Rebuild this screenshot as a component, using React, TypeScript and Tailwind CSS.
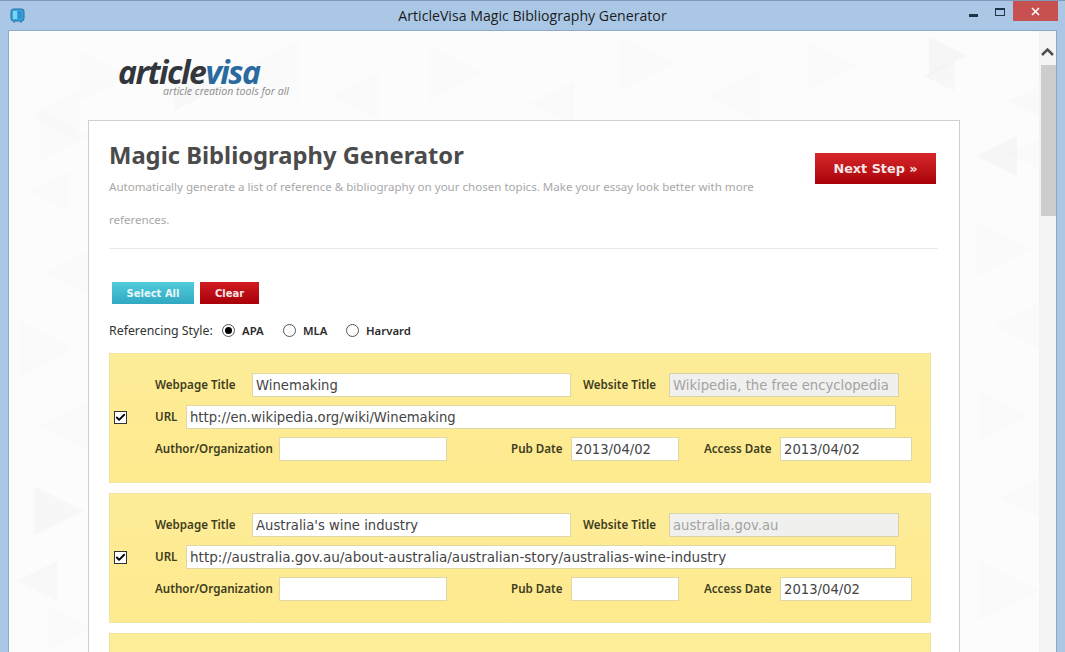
import { Check } from 'lucide-react';

// faint triangles of the page background: [x, y, size, flip, alpha]
const TRIANGLES: [number, number, number, number, number][] = [
  [20, 60, 50, 1, 0.01], [70, 20, 50, 0, 0.012], [165, 35, 45, 0, 0.02], [230, 10, 60, 1, 0.01],
  [320, 40, 50, 1, 0.01], [420, 15, 55, 0, 0.01], [520, 50, 45, 1, 0.01], [610, 5, 55, 0, 0.01],
  [700, 40, 50, 1, 0.01], [800, 10, 50, 0, 0.01], [920, 6, 38, 0, 0.03], [915, 30, 30, 1, 0.025],
  [1000, 50, 40, 1, 0.016], [1000, 100, 45, 1, 0.01], [968, 105, 40, 1, 0.03], [968, 190, 55, 0, 0.01],
  [985, 270, 50, 1, 0.01], [970, 360, 50, 0, 0.012], [990, 440, 55, 1, 0.01], [970, 530, 60, 0, 0.01],
  [30, 80, 50, 0, 0.012], [20, 140, 40, 1, 0.01], [35, 220, 45, 1, 0.012], [10, 290, 55, 0, 0.012],
  [30, 370, 50, 1, 0.012], [25, 455, 50, 0, 0.028], [8, 530, 40, 1, 0.02], [40, 575, 45, 0, 0.012],
];

function Background() {
  return (
    <svg className="absolute inset-0 h-full w-full" aria-hidden="true">
      {TRIANGLES.map(([x, y, s, flip, a], i) => (
        <polygon
          key={i}
          points={flip ? `${x},${y + s / 2} ${x + s},${y} ${x + s},${y + s}` : `${x},${y} ${x + s},${y + s / 2} ${x},${y + s}`}
          fill={`rgba(60,60,70,${a})`}
        />
      ))}
    </svg>
  );
}

function Label({ text, className }: { text: string; className: string }) {
  return <span className={`text-[11.6px] font-semibold text-[#3f3d20] font-['Noto_Sans',sans-serif] whitespace-nowrap ${className}`}>{text}</span>;
}

function Field({ value, className, disabled, size = 'text-[13.2px]' }: { value: string; className: string; disabled?: boolean; size?: string }) {
  return (
    <input
      readOnly
      value={value}
      className={`h-6 border px-[3px] font-['DejaVu_Sans',sans-serif] outline-none ${size} ${
        disabled ? 'border-[#d8d2a8] bg-[#f0f0ee] text-[#a3a3a3]' : 'border-[#dfd8a4] bg-white text-[#444444]'
      } ${className}`}
    />
  );
}

function Reference({ title, site, url, pubDate, accessDate, urlSize }: { title: string; site: string; url: string; pubDate: string; accessDate: string; urlSize?: string }) {
  return (
    <div className="flex h-[130px] w-[822px] items-center border border-[#f0e6a4] bg-gradient-to-b from-[#fdec98] to-[#feea8e] pb-[2px]">
      <span className="ml-[4px] flex h-[13px] w-[13px] items-center justify-center border border-[#333333] bg-white">
        <Check className="h-[11px] w-[11px] text-black" strokeWidth={4} />
      </span>
      <div className="ml-[28px] flex flex-col gap-2">
        <div className="flex items-center">
          <Label text="Webpage Title" className="w-[97px]" />
          <Field value={title} className="w-[319px]" />
          <Label text="Website Title" className="ml-3 w-[86px]" />
          <Field value={site} disabled className="w-[230px]" />
        </div>
        <div className="flex items-center">
          <Label text="URL" className="w-[31px]" />
          <Field value={url} size={urlSize} className="w-[710px]" />
        </div>
        <div className="flex items-center">
          <Label text="Author/Organization" className="w-[124px]" />
          <Field value="" className="w-[168px]" />
          <Label text="Pub Date" className="ml-16 w-[60px]" />
          <Field value={pubDate} className="w-[108px]" />
          <Label text="Access Date" className="ml-[25px] w-[76px]" />
          <Field value={accessDate} className="w-[132px]" />
        </div>
      </div>
    </div>
  );
}

function Radio({ label, checked, className }: { label: string; checked?: boolean; className: string }) {
  return (
    <span className={`flex items-center ${className}`}>
      <span className="flex h-[13px] w-[13px] items-center justify-center rounded-full border border-[#555555] bg-white">
        {checked && <span className="h-[7px] w-[7px] rounded-full bg-black" />}
      </span>
      <span className="ml-[7px] text-[11.4px] font-semibold text-[#2b2b2b] font-['Noto_Sans',sans-serif]">{label}</span>
    </span>
  );
}

export default function App() {
  return (
    <div className="flex h-screen flex-col overflow-hidden border-t border-[#7d9cbc] bg-[#aac8e6] font-['Open_Sans',sans-serif]">
      {/* Title bar */}
      <div className="relative flex h-[29px] shrink-0 items-center justify-center">
        <svg className="absolute left-[10px] top-[7px] h-[15px] w-[15px]" viewBox="0 0 15 15" aria-hidden="true">
          <rect x="1" y="1" width="13" height="12" rx="2.5" fill="#3aa6e0" stroke="#1f6f9f" />
          <rect x="3" y="3" width="4" height="8" fill="#7fd0f5" />
          <rect x="8" y="3" width="4" height="8" fill="#2f93d2" />
          <path d="M3 14h2M10 14h2" stroke="#1f6f9f" />
        </svg>
        <span className="text-[14.15px] text-[#1c1c1c]">ArticleVisa Magic Bibliography Generator</span>
        <span className="absolute left-[969px] top-[13px] h-[3px] w-[9px] bg-[#1f3347]" />
        <span className="absolute left-[995px] top-[7px] h-[8px] w-[10px] border border-t-2 border-[#1f3347]" />
        <span className="absolute left-[1013px] top-0 flex h-[20px] w-[45px] items-center justify-center bg-[#c75050]">
          <svg className="h-[9px] w-[9px]" viewBox="0 0 9 9" aria-hidden="true">
            <path d="M1 1l7 7M8 1L1 8" stroke="#fff" strokeWidth="1.6" />
          </svg>
        </span>
      </div>

      {/* Client area */}
      <div className="mx-2 flex min-h-0 flex-1 border-t border-l border-r border-[#8ea9c4] bg-white">
        <div className="relative min-w-0 flex-1 overflow-hidden bg-[#fcfcfc]">
          <Background />
          <div className="relative">
            {/* Logo */}
            <div className="ml-[109px] h-[89px] pt-[29px]">
              <div className="text-[32px] font-bold italic leading-[24px] tracking-[-1.5px] text-[#33373d]">
                article<span className="text-[#2a6a9e]">visa</span>
              </div>
              <div className="ml-[45px] mt-[2px] text-[10.6px] italic leading-[10px] text-[#8b8b8b]">article creation tools for all</div>
            </div>

            {/* Panel */}
            <div className="ml-[79px] w-[872px] border border-[#cfcfcf] bg-white/90 pl-5 pr-[21px]">
              <div className="flex justify-between">
                <div className="w-[660px] pt-[20px]">
                  <h1 className="text-[23.75px] font-bold leading-[29px] text-[#4b4b4b] font-['Noto_Sans',sans-serif]">Magic Bibliography Generator</h1>
                  <p className="text-[11.55px] leading-[33px] text-[#a8a8a8] font-['Noto_Sans',sans-serif]">
                    Automatically generate a list of reference &amp; bibliography on your chosen topics. Make your essay look better with more references.
                  </p>
                </div>
                <button className="mr-[2px] mt-[32px] h-[31px] w-[121px] bg-gradient-to-b from-[#d8262a] to-[#a80006] text-[12.8px] font-bold text-[#f6e6e6] font-['DejaVu_Sans',sans-serif]">
                  Next Step »
                </button>
              </div>

              <div className="mt-[12px] border-t border-[#e9e9e9]" />

              <div className="ml-[3px] mt-[33px] flex gap-[6px]">
                <button className="h-[22px] w-[82px] bg-gradient-to-b from-[#52cbdc] to-[#30a8c2] text-[10px] font-bold text-[#e8f8fb] font-['DejaVu_Sans',sans-serif]">Select All</button>
                <button className="h-[22px] w-[59px] bg-gradient-to-b from-[#d01a20] to-[#a80008] text-[10px] font-bold text-[#f6e6e6] font-['DejaVu_Sans',sans-serif]">Clear</button>
              </div>

              <div className="mt-[18px] flex h-[18px] items-center text-[12.35px] text-[#333333] font-['Noto_Sans',sans-serif]">
                <span className="w-[113px]">Referencing Style:</span>
                <Radio label="APA" checked className="w-[61px]" />
                <Radio label="MLA" className="w-[63px]" />
                <Radio label="Harvard" className="w-[80px]" />
              </div>

              <div className="mt-[13px] flex flex-col gap-[10px]">
                <Reference title="Winemaking" site="Wikipedia, the free encyclopedia" url="http://en.wikipedia.org/wiki/Winemaking" pubDate="2013/04/02" accessDate="2013/04/02" />
                <Reference title="Australia's wine industry" site="australia.gov.au" url="http://australia.gov.au/about-australia/australian-story/australias-wine-industry" urlSize="text-[13.55px]" pubDate="" accessDate="2013/04/02" />
                <div className="h-[130px] w-[822px] border border-[#f0e6a4] bg-[#fdec98]" />
              </div>
            </div>
          </div>
        </div>

        {/* Scrollbar */}
        <div className="relative w-[17px] shrink-0 bg-[#f4f4f5]">
          <svg className="absolute left-[1px] top-[16px] h-[10px] w-[15px]" viewBox="0 0 15 10" aria-hidden="true">
            <path d="M2 8l5.5-5.5L13 8" fill="none" stroke="#505050" strokeWidth="2.5" />
          </svg>
          <div className="ml-[2px] mt-[34px] h-[151px] w-[15px] bg-[#cdcdcd]" />
        </div>
      </div>
    </div>
  );
}
